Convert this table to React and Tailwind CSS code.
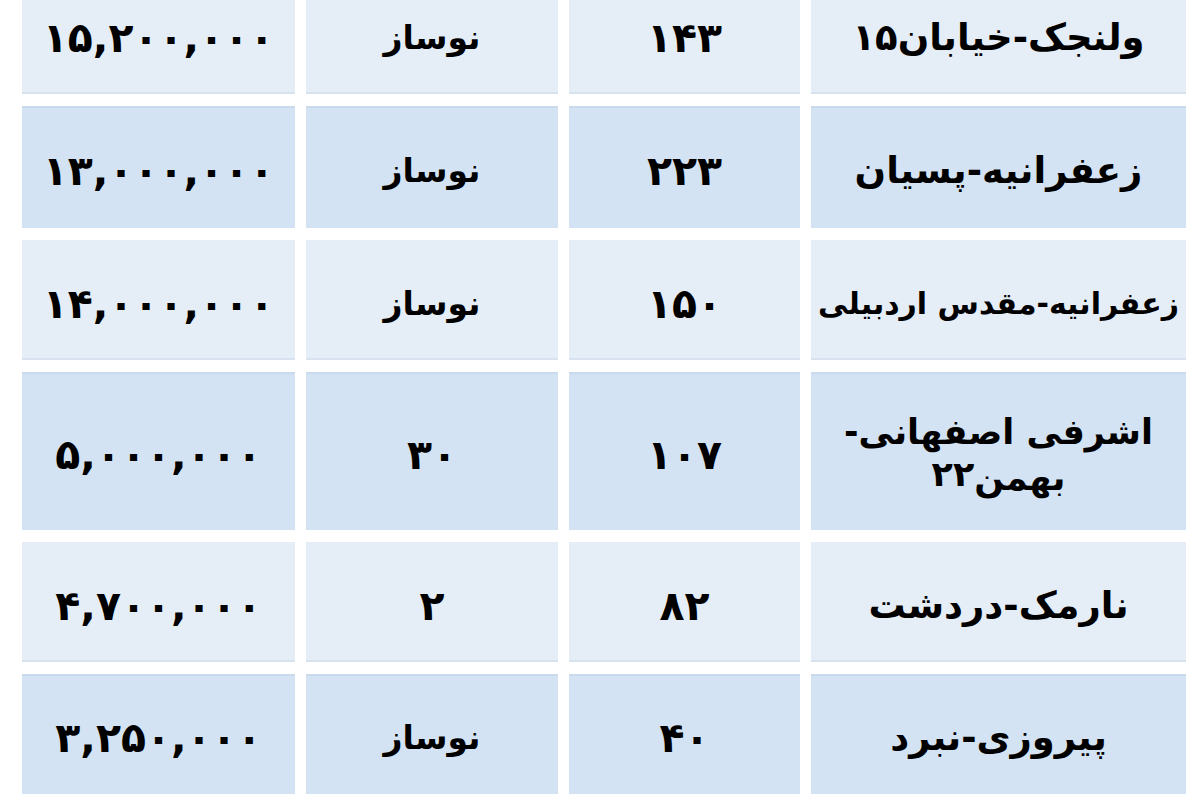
const rows = [
  { price: "۱۵,۲۰۰,۰۰۰", age: "نوساز", area: "۱۴۳", place: ["ولنجک-خیابان۱۵"], tone: "light", h: "h-[120px]" },
  { price: "۱۳,۰۰۰,۰۰۰", age: "نوساز", area: "۲۲۳", place: ["زعفرانیه-پسیان"], tone: "dark", h: "h-[122px]" },
  { price: "۱۴,۰۰۰,۰۰۰", age: "نوساز", area: "۱۵۰", place: ["زعفرانیه-مقدس اردبیلی"], tone: "light", h: "h-[120px]", size: "text-[30px] leading-[46px]" },
  { price: "۵,۰۰۰,۰۰۰", age: "۳۰", area: "۱۰۷", place: ["اشرفی اصفهانی-", ["۲۲", "بهمن"]], tone: "dark", h: "h-[158px]", size: "text-[35px] leading-[46px]" },
  { price: "۴,۷۰۰,۰۰۰", age: "۲", area: "۸۲", place: ["نارمک-دردشت"], tone: "light", h: "h-[120px]" },
  { price: "۳,۲۵۰,۰۰۰", age: "نوساز", area: "۴۰", place: ["پیروزی-نبرد"], tone: "dark", h: "h-[120px]" },
];

function Cell({ tone, h, children, rtl, className = "" }) {
  const bg =
    tone === "light"
      ? "bg-[#e5edf7] shadow-[inset_0_-2px_0_#d8e2ee]"
      : "bg-[#d3e3f3] shadow-[inset_0_2px_0_#c9daec]";
  return (
    <div
      dir={rtl ? "rtl" : "ltr"}
      className={`${bg} ${h} flex flex-col items-center justify-center pt-[8px] text-center whitespace-nowrap ${className}`}
    >
      {children}
    </div>
  );
}

export default function App() {
  return (
    <div className="w-[1200px] h-[800px] overflow-hidden bg-white">
      <div
        className="-mt-[26px] ml-[22px] grid grid-cols-[273px_252px_231px_375px] gap-x-[11px] gap-y-[12px] font-bold text-black"
        style={{ fontFamily: '"DejaVu Sans", "Noto Sans", sans-serif' }}
      >
        {rows.map((r, i) => (
          <div key={i} className="contents">
            <Cell tone={r.tone} h={r.h} className="text-[41px] leading-[46px] tracking-[0.03em]">
              <span>{r.price}</span>
            </Cell>
            <Cell tone={r.tone} h={r.h} rtl className={/^[۰-۹]+$/.test(r.age) ? "text-[41px] leading-[46px]" : "text-[33px] leading-[46px]"}>
              <span>{r.age}</span>
            </Cell>
            <Cell tone={r.tone} h={r.h} className="text-[41px] leading-[46px] tracking-[0.03em]">
              <span>{r.area}</span>
            </Cell>
            <Cell tone={r.tone} h={r.h} rtl className={r.size || "text-[37px] leading-[48px]"}>
              {r.place.map((line, j) =>
                Array.isArray(line) ? (
                  <div key={j} dir="ltr" className="flex items-start">
                    <span className="-mt-[4px]">{line[0]}</span>
                    <span dir="rtl">{line[1]}</span>
                  </div>
                ) : (
                  <span key={j}>{line}</span>
                )
              )}
            </Cell>
          </div>
        ))}
      </div>
    </div>
  );
}
